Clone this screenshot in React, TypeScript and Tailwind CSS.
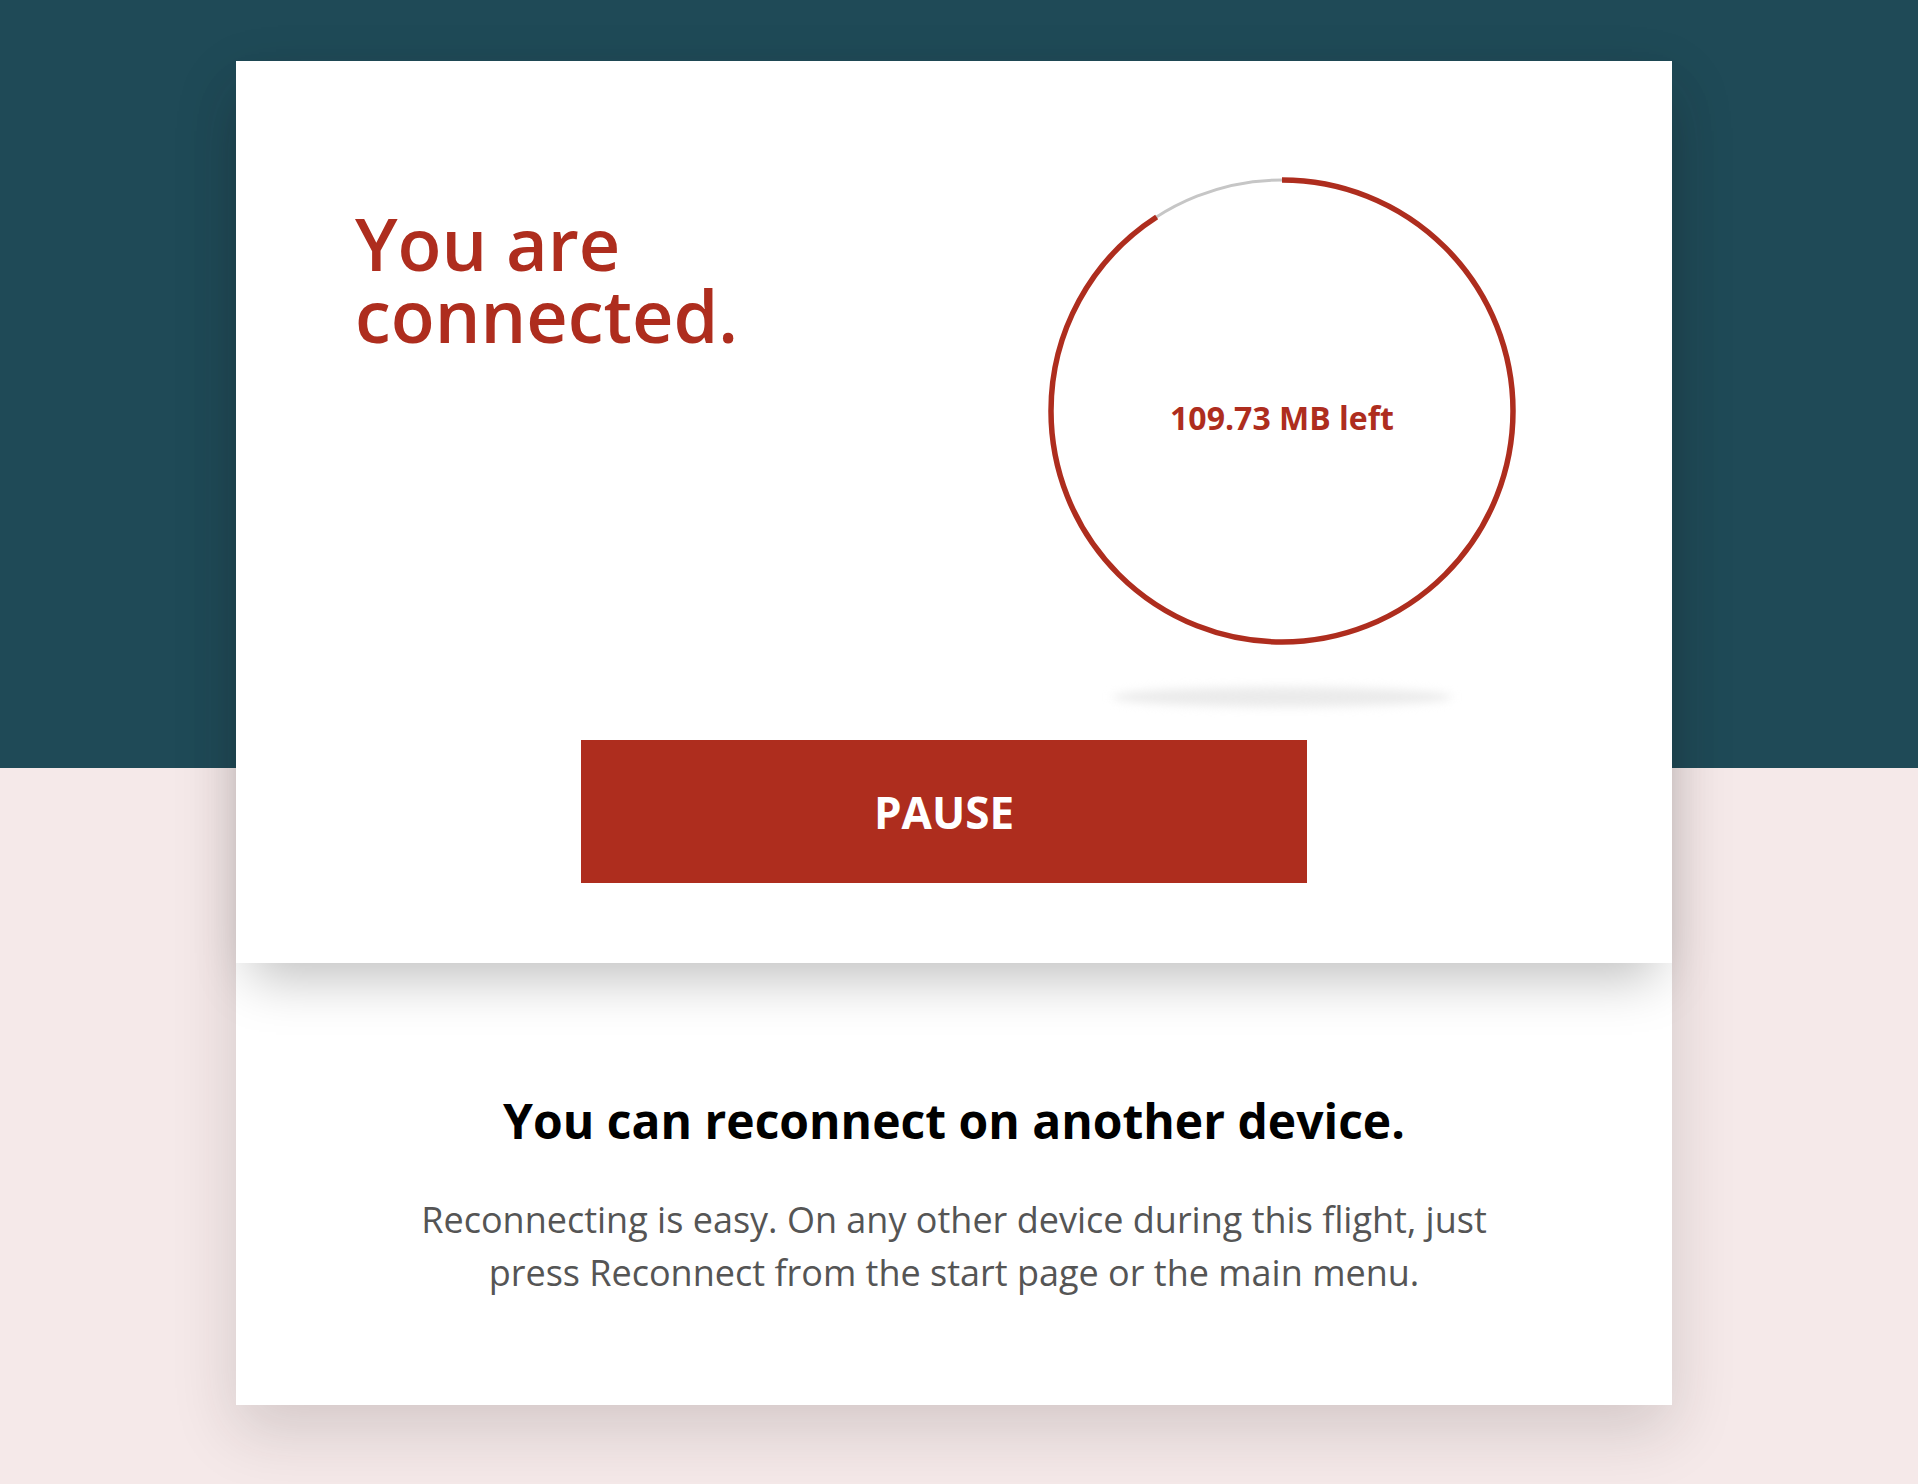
const RED = "#ae2d1e";

function DataRing() {
  const r = 231;
  const circumference = 2 * Math.PI * r;
  const used = circumference * (327 / 360);
  return (
    <div className="flex flex-col items-center">
      <div className="relative h-[480px] w-[480px]">
        <svg width="480" height="480" viewBox="0 0 480 480" className="block">
          <circle cx="240" cy="240" r={r} fill="none" stroke="#c6c6c6" strokeWidth="3" />
          <circle
            cx="240"
            cy="240"
            r={r}
            fill="none"
            stroke={RED}
            strokeWidth="5.5"
            strokeDasharray={`${used} ${circumference}`}
            transform="rotate(-90 240 240)"
          />
        </svg>
        <div className="absolute inset-0 flex items-center justify-center">
          <span className="mt-[14px] text-[32px] font-bold leading-none text-[#ae2d1e]">109.73 MB left</span>
        </div>
      </div>
      <div className="mt-[36px] h-[20px] w-[340px] rounded-[50%] bg-[#ebebeb] blur-[5px]" />
    </div>
  );
}

export default function App() {
  return (
    <div
      className="min-h-[1484px] w-full bg-[linear-gradient(to_bottom,#1f4a57_768px,#f5e9e9_768px)] pt-[61px] pb-[79px]"
      style={{ fontFamily: '"Open Sans", "Noto Sans", sans-serif' }}
    >
      <div className="ml-[236px] w-[1436px] shadow-[0_25px_60px_rgba(40,30,30,0.16)]">
        <section className="relative z-10 h-[902px] bg-white pt-[110px] shadow-[0_30px_50px_-15px_rgba(0,0,0,0.25)]">
          <div className="flex items-start justify-between pl-[119px] pr-[150px]">
            <h1 className="mt-[36px] text-[72px] font-semibold leading-[72px] text-[#ae2d1e]">
              You are
              <br />
              connected.
            </h1>
            <DataRing />
          </div>
          <button
            type="button"
            className="mt-[33px] ml-[345px] flex h-[143px] w-[726px] items-center justify-center bg-[#ae2d1e] text-[44px] font-bold leading-none text-white"
          >
            PAUSE
          </button>
        </section>
        <section className="flex h-[442px] flex-col items-center bg-white pt-[131px] text-center">
          <h2 className="text-[48px] font-bold leading-[53px] text-black">You can reconnect on another device.</h2>
          <p className="mt-[46px] text-[36px] leading-[53px] text-[#555555]">
            Reconnecting is easy. On any other device during this flight, just
            <br />
            press Reconnect from the start page or the main menu.
          </p>
        </section>
      </div>
    </div>
  );
}
